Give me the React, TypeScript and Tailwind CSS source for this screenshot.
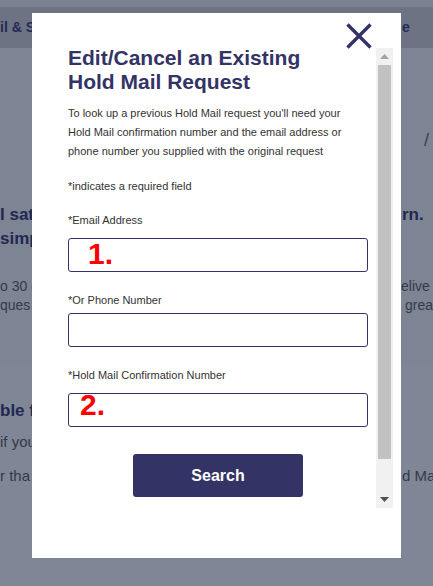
import React from "react";

function Row({ left, right, rightPad = 0, className = "" }: { left: string; right: string; rightPad?: number; className?: string }) {
  return (
    <div className={"grid grid-cols-[401px_32px] " + className}>
      <div className="overflow-hidden whitespace-nowrap">{left}</div>
      <div className="overflow-hidden whitespace-nowrap" style={{ paddingLeft: rightPad }}>{right}</div>
    </div>
  );
}

function Field({ label, labelClass, mark, markClass }: { label: string; labelClass: string; mark?: string; markClass?: string }) {
  return (
    <>
      <div className={"text-[11px] leading-[19px] text-[#333333] " + labelClass}>{label}</div>
      <div className="relative">
        <input className="block w-full h-[34px] border border-[#333366] rounded-[3px] bg-white outline-none" />
        {mark && (
          <span className={"absolute text-[30px] leading-[30px] font-bold text-[#ff0000] pointer-events-none " + markClass}>{mark}</span>
        )}
      </div>
    </>
  );
}

export default function App() {
  return (
    <div className="relative w-[433px] h-[586px] overflow-hidden bg-[#7e8594] font-['Liberation_Sans',Arial,sans-serif]">
      {/* background page (dimmed) */}
      <div className="h-[7px] bg-[#7b8291]" />
      <div className="h-[41px] bg-[#6d7383] flex items-center">
        <Row left="il & S" right="e" rightPad={1} className="w-full text-[14px] font-bold text-[#252b56]" />
      </div>
      <div className="h-[317px] bg-[#7d8493] flex flex-col">
        <div className="mt-[80px] h-[24px] flex justify-end pr-[4px] text-[18px] leading-[24px] text-[#3a3f4d]">/</div>
        <div className="mt-[51px] text-[17px] leading-[24px] font-bold text-[#222851]">
          <Row left="l sat" right="rn." rightPad={1} />
          <Row left="simp" right="" />
        </div>
        <div className="mt-[26px] text-[14px] leading-[19px] text-[#353a48]">
          <Row left="o 30 d" right="elive" />
          <Row left="ques" right="grea" rightPad={4} />
        </div>
      </div>
      <div className="flex flex-col bg-[#7f8696] h-[221px]">
        <div className="mt-[34px] text-[17px] leading-[24px] font-bold text-[#222851]">
          <Row left="ble f" right="" />
        </div>
        <div className="mt-[9px] text-[15px] leading-[19px] text-[#353a48]">
          <Row left="if you" right="" />
        </div>
        <div className="mt-[15px] text-[15px] leading-[19px] text-[#353a48]">
          <Row left="r tha" right="d Ma" rightPad={1} />
        </div>
      </div>

      {/* modal */}
      <div className="absolute left-[32px] top-[13px] w-[369px] h-[545px] bg-white">
        <button className="absolute left-[314px] top-[10px] w-[26px] h-[26px]" aria-label="Close">
          <svg width="26" height="26" viewBox="0 0 26 26">
            <path d="M1.5 1.5 L24.5 24.5 M24.5 1.5 L1.5 24.5" stroke="#333366" strokeWidth="3.4" fill="none" />
          </svg>
        </button>
        <div className="flex pt-[33px] pl-[36px]">
          <div className="w-[300px] flex flex-col">
            <h2 className="text-[21px] leading-[24px] font-bold text-[#333366] whitespace-nowrap">
              Edit/Cancel an Existing
              <br />
              Hold Mail Request
            </h2>
            <p className="mt-[10px] text-[11px] leading-[19px] text-[#333333] whitespace-nowrap">
              To look up a previous Hold Mail request you'll need your
              <br />
              Hold Mail confirmation number and the email address or
              <br />
              phone number you supplied with the original request
            </p>
            <p className="mt-[16px] text-[11px] leading-[19px] text-[#333333]">*indicates a required field</p>
            <Field label="*Email Address" labelClass="mt-[15px] mb-[8px]" mark="1." markClass="left-[20px] top-[1px]" />
            <Field label="*Or Phone Number" labelClass="mt-[19px] mb-[3px]" />
            <Field label="*Hold Mail Confirmation Number" labelClass="mt-[19px] mb-[8px]" mark="2." markClass="left-[12px] top-[-3px]" />
            <button className="mt-[27px] mx-auto w-[170px] h-[43px] rounded-[3px] bg-[#333366] text-white text-[16px] font-bold">
              Search
            </button>
          </div>
          <div className="ml-[8px] mt-[2px] w-[17px] h-[460px] bg-[#f1f1f1] flex flex-col items-center">
            <div className="h-[17px] flex items-center justify-center">
              <svg width="9" height="5" viewBox="0 0 9 5"><path d="M0 5 L4.5 0 L9 5 Z" fill="#a3a3a3" /></svg>
            </div>
            <div className="w-[13px] h-[394px] bg-[#c1c1c1]" />
            <div className="flex-1" />
            <div className="h-[17px] flex items-center justify-center">
              <svg width="9" height="5" viewBox="0 0 9 5"><path d="M0 0 L9 0 L4.5 5 Z" fill="#505050" /></svg>
            </div>
          </div>
        </div>
      </div>
    </div>
  );
}
